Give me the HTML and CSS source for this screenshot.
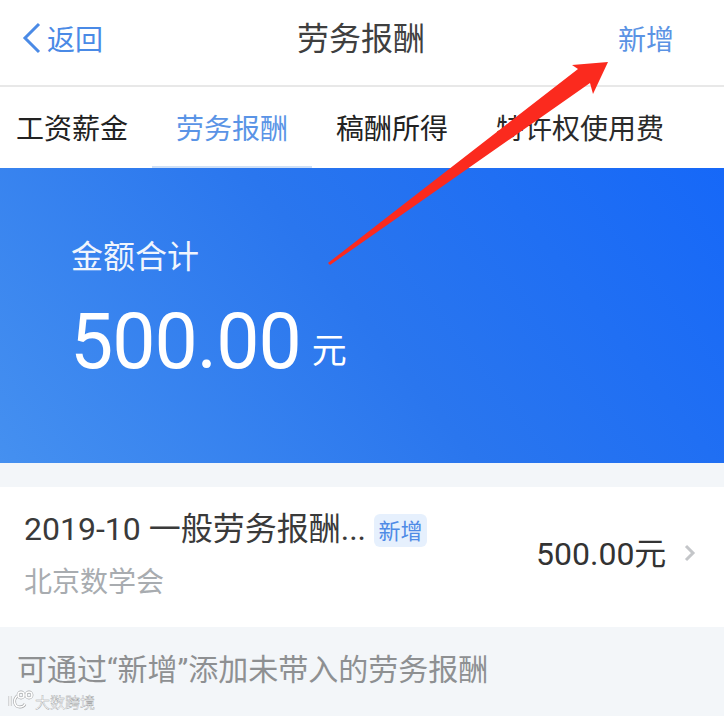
FILE: index.html
```html
<!DOCTYPE html>
<html lang="zh">
<head>
<meta charset="utf-8">
<title>劳务报酬</title>
<link rel="stylesheet" href="styles.css">
</head>
<body>
<div class="page">
  <header class="nav">
    <div class="nav-back">
      <svg class="back-icon" width="20" height="32" viewBox="0 0 20 32"><path d="M18 2 L4 16 L18 30" fill="none" stroke="#4a8ae6" stroke-width="3"/></svg>
      <span>返回</span>
    </div>
    <div class="nav-title">劳务报酬</div>
    <div class="nav-add">新增</div>
  </header>
  <nav class="tabs">
    <div class="tab tab-1">工资薪金</div>
    <div class="tab tab-2 active">劳务报酬</div>
    <div class="tab tab-3">稿酬所得</div>
    <div class="tab tab-4">特许权使用费</div>
  </nav>
  <section class="banner">
    <div class="banner-label">金额合计</div>
    <div class="banner-amount"><span class="num">500.00</span><span class="unit">元</span></div>
  </section>
  <section class="row">
    <div class="row-main">
      <div class="row-title"><span>2019-10 一般劳务报酬...</span><span class="tag">新增</span></div>
      <div class="row-sub">北京数学会</div>
    </div>
    <div class="row-amount">500.00元</div>
    <svg class="chev" width="12" height="18" viewBox="0 0 12 18"><path d="M2 2 L9 9 L2 16" fill="none" stroke="#c4c6c9" stroke-width="3"/></svg>
  </section>
  <footer class="hint">可通过“新增”添加未带入的劳务报酬</footer>
</div>
<svg class="arrow" width="724" height="716" viewBox="0 0 724 716"><polygon points="328,263 578,69 572,65 608,62 593,94 590,83 330,265" fill="#fb2a1e"/></svg>
<div class="mark">
  <svg class="mark-logo" width="27" height="20" viewBox="0 0 27 20">
    <g fill="none" stroke="#a4a6a8" stroke-width="2.8"><path d="M3 6 V16"/><path d="M10 6 C6 10 7 17 13 17 C15 17 17 16 18 14"/><circle cx="14" cy="5" r="3"/><circle cx="22" cy="5" r="3"/></g>
    <g fill="none" stroke="#fff" stroke-width="1.6"><path d="M3 6 V16"/><path d="M10 6 C6 10 7 17 13 17 C15 17 17 16 18 14"/><circle cx="14" cy="5" r="3"/><circle cx="22" cy="5" r="3"/></g>
  </svg>
  <span>大数跨境</span>
</div>
</body>
</html>
```
FILE: styles.css
```css
* { box-sizing: border-box; }
html, body { margin: 0; padding: 0; }
body {
  width: 724px;
  height: 716px;
  overflow: hidden;
  position: relative;
  background: #f3f6f9;
  font-family: "Noto Sans CJK SC", "Roboto", sans-serif;
}
.page { display: flex; flex-direction: column; height: 716px; }
.num, .row-amount, .row-title, .hint { font-family: "Roboto", "Noto Sans CJK SC", sans-serif; }

.nav {
  height: 87px;
  flex: none;
  background: #fff;
  border-bottom: 2px solid #e8e8e8;
  display: grid;
  grid-template-columns: 1fr auto 1fr;
  align-items: center;
  padding: 0 22px 9px 21px;
}
.nav-back {
  display: flex;
  align-items: center;
  gap: 6px;
  color: #4a8ae6;
  font-size: 28px;
  line-height: 36px;
}
.nav-title { color: #3f3f3f; font-size: 32px; line-height: 44px; margin: 0 0 4px -1px; }
.nav-add { justify-self: end; color: #5b93e4; font-size: 28px; line-height: 36px; margin-right: 28px; }

.tabs {
  height: 81px;
  flex: none;
  background: #fff;
  display: flex;
  align-items: stretch;
  padding-left: 16px;
}
.tab {
  font-size: 28px;
  line-height: 80px;
  color: #222;
  white-space: nowrap;
}
.tab-1 { width: 136px; }
.tab-2 { width: 160px; padding-left: 24px; }
.tab-3 { width: 184px; padding-left: 24px; }
.tab-4 { color: #2a2a2a; }
.active { color: #5a94e6; border-bottom: 2px solid #cfe0f6; height: 81px; }

.banner {
  height: 295px;
  flex: none;
  background: linear-gradient(232deg, #1668f8 0%, #2a76ee 50%, #4590f0 100%);
  color: #fff;
  padding: 66px 0 0 71px;
}
.banner-label { font-size: 32px; line-height: 40px; color: #f0f5fd; }
.banner-amount { margin-top: 21px; white-space: nowrap; line-height: 94px; }
.num { font-size: 77px; letter-spacing: -1px; font-weight: 400; margin-left: -1px; }
.unit { font-size: 35px; margin-left: 11px; vertical-align: 5px; }

.row {
  margin-top: 24px;
  height: 140px;
  flex: none;
  background: #fff;
  display: flex;
  align-items: center;
  padding-left: 24px;
}
.row-main { width: 512px; padding-bottom: 9px; }
.row-title {
  display: flex;
  align-items: center;
  font-size: 32px;
  line-height: 44px;
  color: #3a3a3a;
  white-space: nowrap;
}
.tag {
  margin: 3px 0 0 8px;
  width: 53px;
  height: 33px;
  border-radius: 6px;
  background: #e6f0fd;
  color: #4f8be6;
  font-size: 22px;
  line-height: 31px;
  text-align: center;
  font-family: "Noto Sans CJK SC", sans-serif;
}
.row-sub { font-size: 28px; line-height: 36px; color: #a8acb0; margin-top: 11px; }
.row-amount { font-size: 32px; color: #333; line-height: 40px; white-space: nowrap; width: 149px; margin-top: -6px; }
.chev { margin-top: -8px; margin-left: -1px; }

.hint {
  flex: 1;
  padding: 23px 0 0 17px;
  font-size: 30px;
  line-height: 40px;
  color: #8e9092;
  white-space: nowrap;
}

.arrow { position: absolute; left: 0; top: 0; pointer-events: none; }
.mark {
  position: absolute;
  left: 7px;
  top: 690px;
  display: flex;
  align-items: center;
  gap: 1px;
  color: #fff;
  font-size: 15px;
  line-height: 22px;
  -webkit-text-stroke: 0.35px #989a9c;
}
.mark-logo { margin-bottom: 4px; }
```
